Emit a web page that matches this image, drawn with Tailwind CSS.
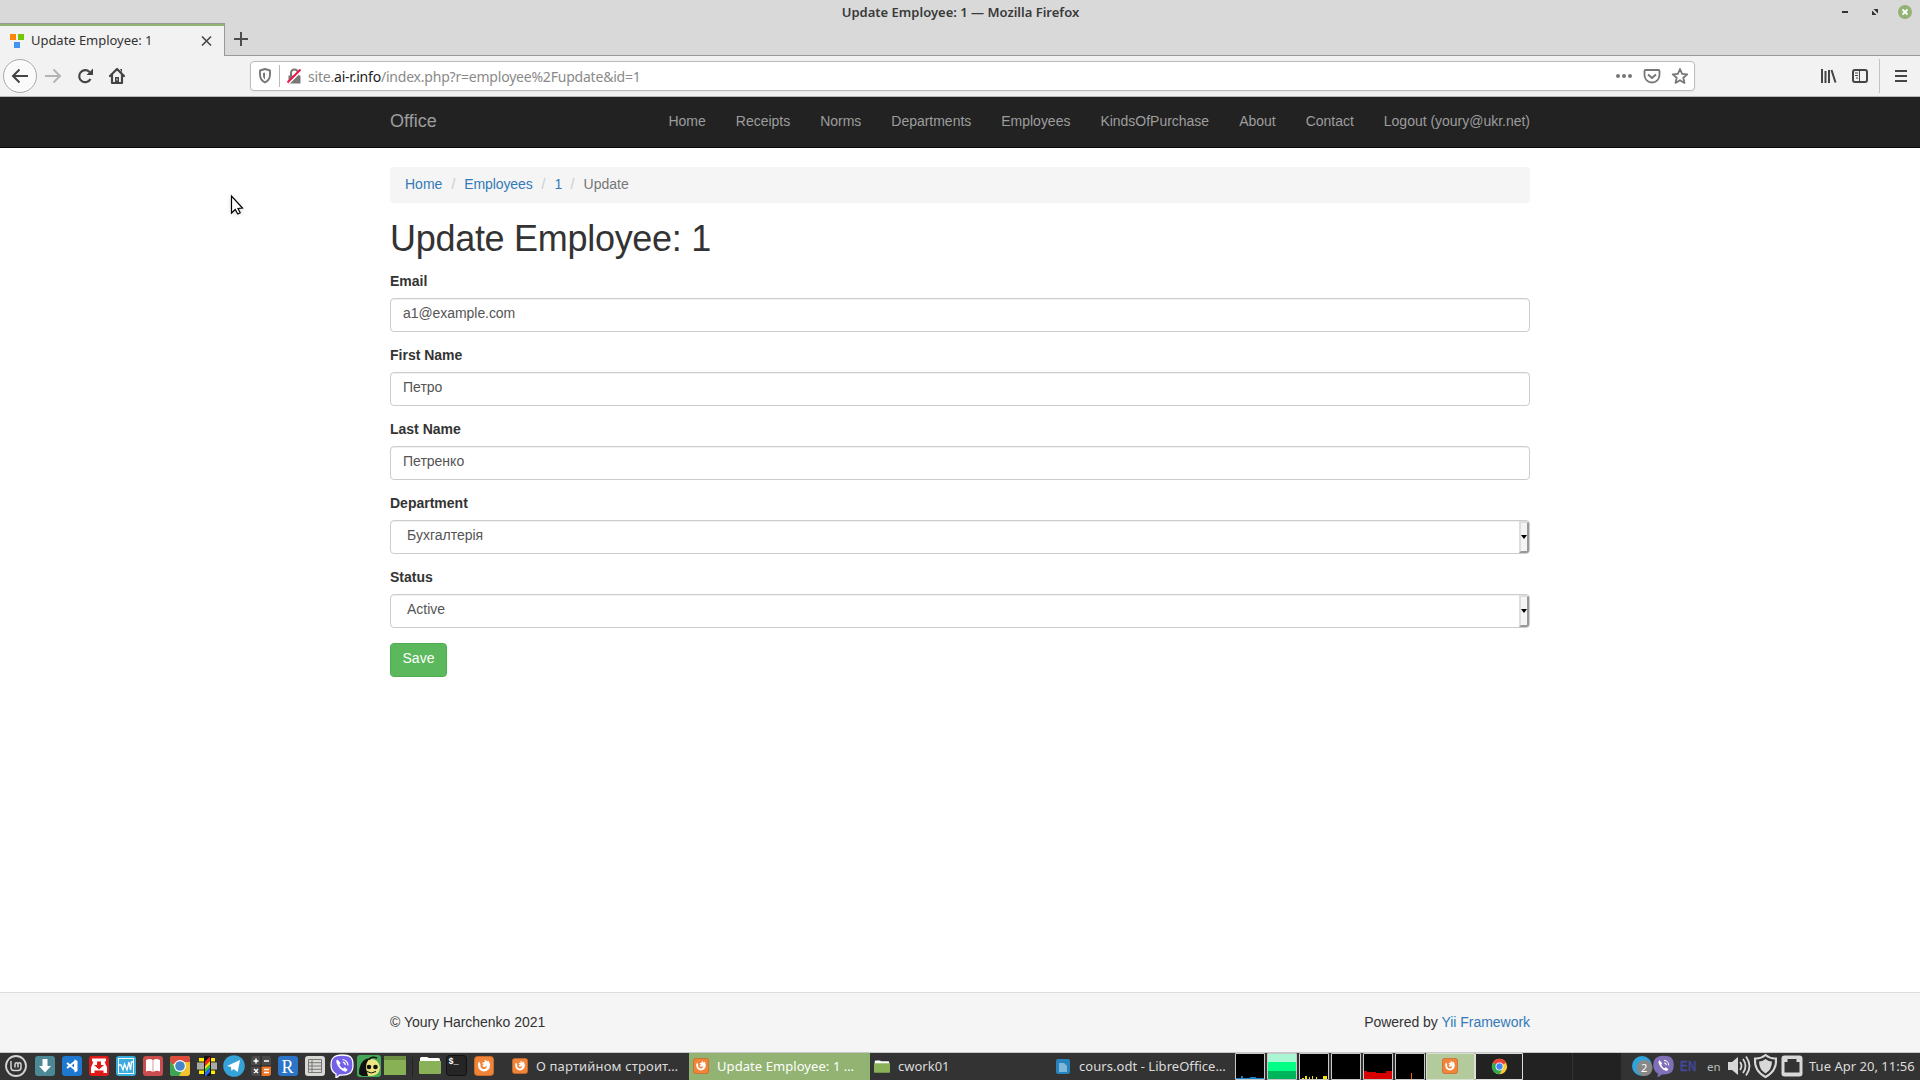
<!DOCTYPE html>
<html lang="en">
<head>
<meta charset="utf-8">
<title>Update Employee: 1</title>
<script src="https://cdn.jsdelivr.net/npm/@tailwindcss/browser@4"></script>
</head>
<body class="relative w-[1920px] h-[1080px] overflow-hidden flex flex-col bg-white font-['Noto_Sans',sans-serif] text-[#333]">
<svg class="hidden">
  <symbol id="firefox" viewBox="0 0 20 20"><rect x=".5" y=".5" width="19" height="19" rx="3" fill="#f08438" stroke="#c96a2b"/><path d="M4 9.500a6 6 0 0 0 12 0C16 7 15 5 13.500 4c.3 1 .2 1.500 0 2-.8-1.500-2-2-3.500-2 1 .8 1 1.300 1 2-1.500 0-2.500.5-3 1.500.8-.2 1.500 0 2 .5L8.500 9c0 1.500 1 2 2 2 1.200 0 2-.8 2-2 .8 2-.5 4-2.500 4-2.500 0-4-2-3.500-5L5 5.500C4.300 6.500 4 8 4 9.500z" fill="#fff"/></symbol>
  <symbol id="chrome" viewBox="0 0 20 20"><circle cx="10" cy="10" r="9" fill="#fcc934"/><path d="M10 10 2.200 5.500A9 9 0 0 1 17.800 5.500z" fill="#ea4335"/><path d="M10 10 2.200 5.500A9 9 0 0 0 10 19l4-7z" fill="#34a853"/><circle cx="10" cy="10" r="4.600" fill="#fff"/><circle cx="10" cy="10" r="3.700" fill="#4285f4"/></symbol>
  <symbol id="folder" viewBox="0 0 22 20"><path d="M1 5V2.500Q1 1 2.500 1H8l2 1h9.500Q21 2 21 4v2H1z" fill="#fff"/><path d="M0 5h22v12q0 1-1 1H1q-1 0-1-1z" fill="#8bb158"/></symbol>
  <symbol id="viber" viewBox="0 0 24 24"><path d="M12 1C4 1 1 4 1 11c0 5 2 7.500 5 9v4l4-3c9 .5 13-2 13-10S20 1 12 1z" fill="currentColor" stroke="var(--ring, #fff)" stroke-width="1.300"/><path d="M7.500 5.500C6 6.500 6 8 7 10c1.500 3.500 4 6 7.500 7.500 1.500.5 2.500-.5 3-2l-3-2.200-1.500 1.200c-1.800-.8-3-2.200-3.500-4L10.600 9z" fill="#fff"/><path d="M12.500 5.500a6 6 0 0 1 5.500 6M12.800 8.200a3 3 0 0 1 2.500 2.800" fill="none" stroke="#fff" stroke-width="1.200"/></symbol>
</svg>

<!-- window title -->
<header class="h-[56px] shrink-0 bg-[#d9d9d9] flex flex-col">
  <div class="h-[23px] grid grid-cols-3 items-center">
    <span></span>
    <span class="text-center text-[13px] leading-[24px] h-[23px] pl-px font-semibold text-[#3a3a3a] whitespace-nowrap">Update Employee: 1 — Mozilla Firefox</span>
    <div class="flex justify-end items-center pr-2 h-[22px]">
      <svg width="70" height="14" viewBox="0 0 70 14"><path d="M0 6h6v2H0z" fill="#333"/><path d="M31.500 4H36v4.500zM30 5.500V10h4.500z" fill="#333"/><circle cx="63" cy="7" r="7" fill="#92b372"/><path d="m60.500 4.500 5 5m0-5-5 5" stroke="#fff" stroke-width="1.900"/></svg>
    </div>
  </div>
  <div class="flex h-[33px]">
    <div class="w-[225px] bg-[#f2f2f2] border-t border-r border-[#999] flex flex-col">
      <div class="h-[2px] bg-[#92b372] shrink-0"></div>
      <div class="flex items-center h-[30px] pl-[10px] pr-[12px]">
        <svg width="14" height="14" viewBox="0 0 14 14"><path d="M0 0h6v6H0z" fill="#ff8400"/><path d="M8 0h6v6H8z" fill="#73c700"/><path d="M4 8h6v6H4z" fill="#4294f0"/></svg>
        <span class="ml-[7px] text-[13px] tracking-[-0.04px] whitespace-nowrap">Update Employee: 1</span>
        <svg class="ml-auto -mt-px" width="11" height="12" viewBox="0 0 11 12"><path d="m1 1.500 9 9m0-9-9 9" stroke="#4a4a4a" stroke-width="1.700"/></svg>
      </div>
    </div>
    <div class="flex-1 border-b border-[#999] pl-[9px] pt-[9px]">
      <svg width="14" height="14" viewBox="0 0 14 14"><path d="M7 0v14M0 7h14" stroke="#4d4d4d" stroke-width="2"/></svg>
    </div>
  </div>
</header>

<!-- browser toolbar -->
<div class="h-[41px] shrink-0 bg-[#f2f2f2] border-b border-[#b8b8b8] flex items-center">
  <svg class="shrink-0" width="130" height="40" viewBox="0 0 130 40" fill="none">
    <circle cx="20" cy="20" r="16.500" fill="#fafafa" stroke="#aaa"/>
    <path d="M28 20H13m6.500-6.500L13 20l6.500 6.500" stroke="#444" stroke-width="2"/>
    <path d="M45 20h15m-6.500-6.500L60 20l-6.500 6.500" stroke="#b4b4b4" stroke-width="2"/>
    <path d="M89.500 16a6 6 0 1 0 1 7" stroke="#444" stroke-width="2.200"/><path d="M93 12.500V19h-6.500z" fill="#444"/>
    <path d="m110 20 7-7 7 7M112 18v9h10v-9" stroke="#444" stroke-width="2.200" stroke-linejoin="round" stroke-linecap="round"/><path d="M120 13h2v4z" fill="#444"/><path d="M115 21h4v6h-4z" fill="#444"/><path d="M116.500 22.500h1v2h-1z" fill="#f2f2f2"/>
  </svg>
  <div class="ml-[120px] w-[1445px] h-[30px] rounded-[4px] border border-[#bbb] bg-white flex items-center shadow-xs">
    <svg class="ml-[8px]" width="44" height="24" viewBox="0 0 44 24" fill="none">
      <path d="M6 5.500 1 7v4c0 4 2 6.500 5 8 3-1.500 5-4 5-8V7z" transform="translate(0 -.5)" stroke="#777" stroke-width="1.900" stroke-linejoin="round"/><path d="M6 8.500 4 9.100v2c0 2 .7 3.500 2 4.500z" fill="#777"/>
      <path d="M20.500 1v22" stroke="#bbb"/>
      <path d="M29.500 11.500h12v8h-12z" fill="#777"/><path d="M32 12V9a3.500 3.500 0 0 1 7 0v3" stroke="#777" stroke-width="2"/><path d="m29.500 19.500 12.500-12.500" stroke="#fff" stroke-width="2"/><path d="m28.500 18.500 13-13" stroke="#f0144a" stroke-width="2"/>
    </svg>
    <span class="ml-[5px] text-[14px] text-[#8a8a8a] whitespace-nowrap tracking-[-0.21px]">site.<span class="text-[#222]">ai-r.info</span>/index.php?r=employee%2Fupdate&amp;id=1</span>
    <svg class="ml-auto mr-[6px]" width="73" height="20" viewBox="0 0 73 20" fill="none" stroke="#777" stroke-width="1.800">
      <g fill="#777" stroke="none"><circle cx="3" cy="10" r="2"/><circle cx="9" cy="10" r="2"/><circle cx="15" cy="10" r="2"/></g>
      <path d="M30.500 4h13q1 0 1 1v4a7.200 7.200 0 0 1-15 0V5q0-1 1-1z"/><path d="m33 8.500 4 3.500 4-3.500" stroke-width="2"/>
      <path d="m65 3 2.100 4.800 5.200.5-4 3.400 1.200 5.200-4.500-2.700-4.500 2.700 1.200-5.200-4-3.400 5.200-.5z" stroke-linejoin="round"/>
    </svg>
  </div>
  <svg class="ml-auto mr-[11px]" width="90" height="40" viewBox="0 0 90 40" fill="none" stroke="#444" stroke-width="2">
    <path d="M3 13v14M6.500 15v12M10 14v13M12.500 14l4 12.500"/>
    <rect x="34" y="14" width="14" height="12" rx="2"/><path d="M40.500 14v12M36 17h3m-3 2.500h3M37 22h2" stroke-width="1"/>
    <path d="M60.500 3v34" stroke="#c4c4c4" stroke-width="1"/>
    <path d="M76 15h12M76 20h12M76 25h12"/>
  </svg>
</div>

<!-- site navbar -->
<nav class="h-[51px] shrink-0 bg-[#222] border-b border-[#080808] font-['Liberation_Sans',sans-serif]">
  <div class="w-[1140px] mx-auto flex justify-between items-start text-[#9d9d9d]">
    <a class="text-[18px] leading-5 pt-[14px]">Office</a>
    <div class="flex gap-[30px] text-sm leading-5 pt-[14px] tracking-[-0.015px]">
      <a>Home</a><a>Receipts</a><a>Norms</a><a>Departments</a><a>Employees</a><a>KindsOfPurchase</a><a>About</a><a>Contact</a><a>Logout (youry@ukr.net)</a>
    </div>
  </div>
</nav>

<main class="flex-1 w-[1140px] mx-auto pt-[19px] font-['Liberation_Sans',sans-serif] text-sm leading-5">
  <div class="h-9 bg-[#f5f5f5] rounded-[4px] px-[15px] pt-[7px] flex text-[#337ab7]">
    <span>Home</span><span class="w-[22px] text-center text-[#ccc]">/</span><span class="tracking-[-0.12px]">Employees</span><span class="w-[22px] text-center text-[#ccc]">/</span><span class="w-[7px]">1</span><span class="w-[22px] text-center text-[#ccc]">/</span><span class="text-[#777]">Update</span>
  </div>
  <h1 class="mt-[16px] h-[52px] text-[36px] leading-[40px] font-normal tracking-[-0.29px]">Update Employee: 1</h1>
  <form class="flex flex-col gap-[15px]">
    <div><label class="block font-bold h-[27px]">Email</label><div class="h-[34px] border border-[#ccc] rounded-[4px] px-3 pt-[4px] text-[#555] inset-shadow-2xs tracking-[-0.06px]">a1@example.com</div></div>
    <div class="-mt-[2px]"><label class="block font-bold h-[27px]">First Name</label><div class="h-[34px] border border-[#ccc] rounded-[4px] px-3 pt-[4px] text-[#555] inset-shadow-2xs">Петро</div></div>
    <div class="-mt-[2px]"><label class="block font-bold h-[27px]">Last Name</label><div class="h-[34px] border border-[#ccc] rounded-[4px] px-3 pt-[4px] text-[#555] inset-shadow-2xs">Петренко</div></div>
    <div class="-mt-[2px]"><label class="block font-bold h-[27px]">Department</label><div class="h-[34px] border border-[#ccc] rounded-[4px] pl-4 flex justify-between text-[#555] inset-shadow-2xs overflow-hidden"><span class="pt-[4px]">Бухгалтерія</span><span class="w-[10px] border-2 border-t-[#ddd] border-l-[#ddd] border-r-[#999] border-b-[#999] bg-[#f4f4f4] flex items-center justify-center"><svg width="6" height="4" class="shrink-0"><path d="M0 0h6L3 4z"/></svg></span></div></div>
    <div class="-mt-[2px]"><label class="block font-bold h-[27px]">Status</label><div class="h-[34px] border border-[#ccc] rounded-[4px] pl-4 flex justify-between text-[#555] inset-shadow-2xs overflow-hidden"><span class="pt-[4px]">Active</span><span class="w-[10px] border-2 border-t-[#ddd] border-l-[#ddd] border-r-[#999] border-b-[#999] bg-[#f4f4f4] flex items-center justify-center"><svg width="6" height="4" class="shrink-0"><path d="M0 0h6L3 4z"/></svg></span></div></div>
    <button type="button" class="w-[57px] h-[34px] rounded-[4px] border border-[#4cae4c] bg-[#5cb85c] text-white flex justify-center pt-[4px]">Save</button>
  </form>
</main>

<footer class="h-[61px] shrink-0 bg-[#f5f5f5] border-t border-[#ddd] border-b border-b-[#c8c8c8] font-['Liberation_Sans',sans-serif] text-sm leading-5">
  <div class="w-[1140px] mx-auto pt-[19px] flex justify-between tracking-[-0.03px]"><span>© Youry Harchenko 2021</span><span>Powered by <a class="text-[#337ab7]">Yii Framework</a></span></div>
</footer>

<!-- desktop panel -->
<div class="h-[27px] shrink-0 bg-[#333] flex text-[#dcdcdc] text-[13px] whitespace-nowrap overflow-hidden">
  <svg class="shrink-0" width="500" height="27" viewBox="0 0 500 27" fill="none">
    <circle cx="16" cy="13" r="10" stroke="#d4d4d4" stroke-width="1.800"/><path d="M11 8V14.500q0 3 3 3h4q3 0 3-3v-3q0-1.700-1.500-1.700T18 11.500v3m0-3q0-1.700-1.500-1.700T15 11.500v3" stroke="#d4d4d4" stroke-width="1.500"/>
    <rect x="35" y="3" width="20" height="20" rx="3" fill="#4b8996"/><path d="M42.500 6h5v7H51l-6 6.500-6-6.500h3.500z" fill="#fff"/>
    <rect x="62" y="3" width="20" height="20" rx="3" fill="#1e78d0"/><path d="m67 10 8 6.500v-8L67 15" stroke="#fff" stroke-width="2"/><path d="m74.500 6.500 3 1.500v10l-3 1.500z" fill="#fff"/>
    <rect x="89" y="3" width="20" height="20" rx="3" fill="#e01919"/><path d="M92 5.500h14v3h-1.500l2.500 6V20H91v-5.500l2.500-6H92z" fill="#fff"/><path d="M97 8.500h4V12h3l-5 4.500-5-4.500h3zM94.500 17.500h9V20h-9z" fill="#e01919"/>
    <rect x="116" y="3" width="20" height="20" rx="3" fill="#38aee0"/><rect x="118.500" y="5.500" width="15" height="15" stroke="#fff"/><path d="M119 12h2l2 5 1.500-6 2.500 6 2-8 1.500 8 1-8h1.500" stroke="#fff" stroke-width="1.300"/>
    <rect x="143" y="3" width="20" height="20" rx="3" fill="#cc4d4d"/><path d="M146 7q4-2 6.700 0v12q-3-2-6.700-.5zM160 7q-4-2-6.700 0v12q3-2 6.700-.5z" fill="#fff"/>
    <rect x="170" y="3" width="20" height="20" rx="3" fill="#f4c430"/><path d="M170 12V6q0-3 3-3h14q3 0 3 3v3h-10z" fill="#de4b3c"/><path d="M170 8v12q0 3 3 3h6l4-7-6 1z" fill="#3da556"/><circle cx="180" cy="13" r="6" fill="#fff"/><circle cx="180" cy="13" r="4.800" fill="#4585c8"/>
    <path d="M199 5h16v16h-16z" fill="#ffeb00"/><path d="M197 9.500h20v7h-20z" fill="#aaa"/><path d="M199 9h16M199 17h16" stroke="#222"/><path d="M204 3h7v20h-7z" fill="#111"/><path d="m205 8.500 5-5V8l-5 5z" fill="#f22"/><path d="m205 13 5-5v3.500l-5 5z" fill="#fd0"/><path d="m205 16.500 5-5V15l-5 5z" fill="#2c4"/><path d="m205 20 5-5v4l-4 4h-1z" fill="#26f"/>
    <circle cx="234" cy="13" r="10.800" fill="#35a3d8"/><path d="m227 13 13-6-2.300 12-4.200-3-2 2-.5-4z" fill="#fff"/>
    <rect x="251" y="3" width="20" height="20" rx="3" fill="#4a4a4a"/><path d="M261 13h10v7q0 3-3 3h-7z" fill="#ef7624"/><path d="M261 3v20M251 13h20" stroke="#222"/><path d="M253.500 8h5M256 5.500v5M264 8h5M254 16l4 4m0-4-4 4M264 16.500h5m-5 3h5" stroke="#fff" stroke-width="1.500"/>
    <rect x="278" y="3" width="20" height="20" rx="3" fill="#2b74c8"/><text x="281.500" y="19.500" font-family="Liberation Serif, serif" font-size="18" fill="#fff">R</text>
    <rect x="305" y="3" width="20" height="20" rx="3" fill="#d8d8d4"/><path d="M308.500 6.500h13v13h-13zM312 6.500v13M308.500 9.700h13m-13 3.300h13m-13 3.300h13" stroke="#777"/>
    <use href="#viber" x="330" y="1" width="24" height="24" color="#7360e8"/>
    <rect x="357" y="2" width="24" height="22" rx="3" fill="#43a857"/><path d="M361 22q-2-14 8-16 10-1 11 9-1 8-10 8z" fill="#efe580"/><path d="M359 21q0-12 7-15l4-1q-4 4-4 10l2 8h-6z" fill="#111"/><circle cx="369" cy="14" r="2.300" fill="#111"/><circle cx="375.500" cy="14" r="2.300" fill="#111"/><path d="M367 18.500q4 3 9 0" stroke="#111"/><path d="M369 7q2-4 8-2" stroke="#111" stroke-width="1.500"/>
    <path d="M384 3h22v19h-22z" fill="#88b055"/><path d="M384 3h22v4h-22z" fill="#6b8e42"/>
    <path d="M412.500 4v20" stroke="#222"/>
    <use href="#folder" x="419" y="3" width="22" height="20"/>
    <rect x="446.500" y="2.500" width="20" height="20" rx="3" fill="#252525" stroke="#111"/><text x="448.500" y="11" font-family="Liberation Mono, monospace" font-size="8.500" font-weight="bold" fill="#fff">$_</text>
    <use href="#firefox" x="474" y="3" width="20" height="20"/>
  </svg>
  <div class="w-[189px] shrink-0 flex items-center pl-[12px]"><svg width="16" height="16" class="-mt-px"><use href="#firefox"/></svg><span class="ml-[8px] tracking-[0.15px] w-[150px]">О партийном строит…</span></div>
  <div class="w-[181px] shrink-0 flex items-center pl-[4px] bg-[#92b372] text-white"><svg width="16" height="16" class="-mt-px"><use href="#firefox"/></svg><span class="ml-[8px] tracking-[0.07px]">Update Employee: 1 …</span></div>
  <div class="w-[181px] shrink-0 flex items-center pl-[4px]"><svg width="16" height="16"><use href="#folder"/></svg><span class="ml-[8px]">cwork01</span></div>
  <div class="w-[183px] shrink-0 flex items-center pl-[5px]"><svg width="14" height="16"><rect width="14" height="15" rx="2" fill="#2683bd"/><path d="M3 4h5l3 3v6H3z" fill="#7eb7d8"/></svg><span class="ml-[9px] tracking-[0.05px]">cours.odt - LibreOffice…</span></div>
  <svg class="shrink-0" width="387" height="27" viewBox="0 0 387 27">
    <g fill="#000" stroke="#c8c8c8"><path d="M1.500.5h29v26h-29zM33.500.5h29v26h-29zM65.500.5h29v26h-29zM97.500.5h29v26h-29zM129.500.5h29v26h-29zM161.500.5h29v26h-29z"/></g>
    <path d="M2 25h28v1H2zm5-2h2v2H7zm9 1h6v1h-6z" fill="#1782c8"/>
    <path d="M34 1h28v8H34z" fill="#aaf5d2"/><path d="M34 9h28v9H34z" fill="#00ff84"/><path d="M34 18h28v8H34z" fill="#00b45c"/>
    <path d="M68 25h2v1h-2zm3-2h2v3h-2zm4 1h1v2h-1zm3-1h1v3h-1zm4 1h1v2h-1zm7-1h4v3h-4z" fill="#f5e400"/>
    <path d="M130 18h3v1h9v1h10v-2h6v8h-28z" fill="#d60000"/><path d="M177 20h1v6h-1z" fill="#f06a00"/>
    <path d="M192.500.5h48v26h-48z" fill="#b2ca9c" stroke="#d8e0d0"/><use href="#firefox" x="208" y="5" width="16" height="16"/>
    <path d="M241.500.5h47v26h-47z" fill="#222" stroke="#ddd"/><use href="#chrome" x="257" y="5" width="17" height="17"/>
    <path d="M289 0h98v27h-98z" fill="#222"/><path d="M338.500 0v27" stroke="#333"/>
  </svg>
  <svg class="ml-auto shrink-0" width="180" height="27" viewBox="0 0 180 27" fill="none">
    <circle cx="19" cy="13" r="10" fill="#2da5dc"/><circle cx="21.500" cy="15" r="8" fill="#888"/><text x="18" y="19" font-family="Noto Sans, sans-serif" font-size="11" fill="#fff">2</text>
    <use href="#viber" x="30" y="2" width="21" height="22" color="#8070b8" class="[--ring:#8070b8]"/>
    <text x="56.500" y="18" font-family="DejaVu Sans Mono, monospace" font-size="14" fill="#42489a" stroke="#42489a" stroke-width=".4">EN</text>
    <text x="84" y="17.500" font-family="Noto Sans, sans-serif" font-size="11.500" fill="#bbb">en</text>
    <path d="M105 9h4l6-5v18l-6-5h-4z" fill="#d8d8d8"/><path d="M117 9q3 4 0 8M120 6q5 7 0 14M123 3.500q7 9.500 0 19" stroke="#d8d8d8" stroke-width="1.800"/>
    <path d="M142.500 2q-5 4-10.500 3.500Q131 18 142.500 24 154 18 153 5.500 147.500 6 142.500 2z" stroke="#d8d8d8" stroke-width="2"/><path d="M142.500 6q-3 2.500-6.500 2.500 0 8 6.500 12 6.500-4 6.500-12Q145.500 8.500 142.500 6z" fill="#d8d8d8"/>
    <rect x="158.500" y="2.500" width="21" height="21" rx="3" fill="#d8d8d8"/><path d="M161.500 19.500V9h3V6h9v3h3v10.500z" fill="#333"/>
  </svg>
  <span class="shrink-0 w-[117px] pl-[6px] leading-[27px] tracking-[0.02px]">Tue Apr 20, 11:56</span>
</div>

<!-- mouse pointer -->
<svg class="absolute left-[230px] top-[194px] drop-shadow-sm" width="16" height="24" viewBox="0 0 16 24"><path d="M1.500 2v17l3.700-3.500 2.600 4.500 2.400-1.300-2.200-4.300 4.500-.4z" fill="#fff" stroke="#000" stroke-width="1.200"/></svg>
</body>
</html>
